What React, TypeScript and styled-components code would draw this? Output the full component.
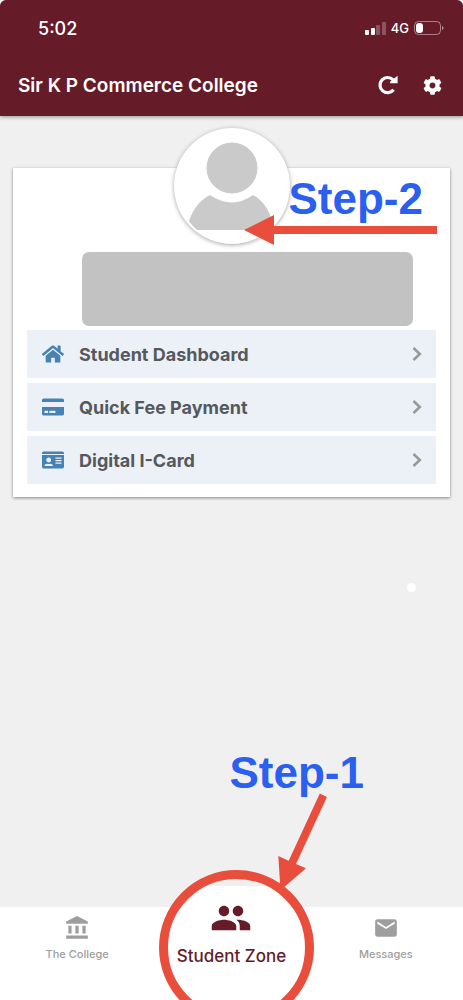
import React from "react";
import styled, { createGlobalStyle } from "styled-components";
import { FaCog, FaHome, FaCreditCard, FaIdCard } from "react-icons/fa";
import { MdAccountBalance, MdEmail, MdGroup } from "react-icons/md";

const colors = {
  maroon: "#661b29",
  page: "#f0f0f0",
  row: "#ebf1f7",
  blue: "#4682b4",
  ink: "#55595c",
  muted: "#9e9e9e",
  red: "#e94e3d",
  callout: "#2b5ff0",
};

const GlobalStyle = createGlobalStyle`
  *, *::before, *::after { box-sizing: border-box; }
  body { margin: 0; background: #fff; font-family: Inter, Roboto, sans-serif; }
`;

const Screen = styled.div`
  position: relative;
  display: flex;
  flex-direction: column;
  min-height: 100vh;
  overflow: hidden;
  border-radius: 6px 6px 0 0;
  background: ${colors.page};
`;

const Header = styled.header`
  background: ${colors.maroon};
  color: #fff;
  box-shadow: 0 1px 4px rgba(0, 0, 0, 0.4);
`;

const StatusBar = styled.div`
  display: flex;
  align-items: center;
  justify-content: space-between;
  height: 56px;
  padding: 0 19px 0 38px;
`;

const Clock = styled.time`
  font-size: 18px;
  font-weight: 500;
`;

const StatusIcons = styled.div`
  display: flex;
  align-items: center;
  gap: 5px;
  font-size: 13px;
  font-weight: 500;
`;

const TitleBar = styled.div`
  display: flex;
  align-items: center;
  justify-content: space-between;
  height: 60px;
  padding: 0 21px 2px 18px;
`;

const Title = styled.h1`
  margin: 0;
  font-size: 19px;
  font-weight: 600;
`;

const Actions = styled.div`
  display: flex;
  align-items: center;
  gap: 25px;
`;

const IconButton = styled.button`
  display: flex;
  padding: 0;
  border: 0;
  background: none;
  color: inherit;
  font-size: 19px;
  cursor: pointer;
`;

const Main = styled.main`
  position: relative;
  flex: 1;
  padding: 52px 13px 24px;
`;

const Card = styled.section`
  position: relative;
  padding: 84px 14px 13px;
  background: #fff;
  box-shadow: 0 1px 3px rgba(0, 0, 0, 0.45);
`;

const Avatar = styled.div`
  position: absolute;
  top: -40px;
  left: calc(50% - 58px);
  width: 116px;
  height: 116px;
  border-radius: 50%;
  background: #fff;
  box-shadow: 0 1px 4px rgba(0, 0, 0, 0.35);
`;

const NameBlock = styled.div`
  height: 74px;
  margin: 0 23px 4px 55px;
  border-radius: 7px;
  background: #c2c2c2;
`;

const Menu = styled.nav`
  display: flex;
  flex-direction: column;
  gap: 5px;
`;

const MenuLink = styled.a`
  display: flex;
  align-items: center;
  height: 48px;
  padding: 0 13px 0 15px;
  background: ${colors.row};
  color: ${colors.ink};
  font-size: 18px;
  font-weight: 700;
  text-decoration: none;
`;

const MenuIcon = styled.span`
  display: flex;
  width: 37px;
  color: ${colors.blue};
  font-size: 22px;
`;

const MenuText = styled.span`
  flex: 1;
`;

const CalloutText = styled.strong<{ $x: number; $y: number }>`
  position: absolute;
  top: ${(p) => p.$y}px;
  left: calc(50% + ${(p) => p.$x}px);
  color: ${colors.callout};
  font: 700 44px/44px "Liberation Sans", Arial, sans-serif;
  white-space: nowrap;
`;

const Arrow = styled.svg<{ $x: number; $y: number }>`
  position: absolute;
  top: ${(p) => p.$y}px;
  left: calc(50% + ${(p) => p.$x}px);
  fill: ${colors.red};
  pointer-events: none;
`;

const Dot = styled.span`
  position: absolute;
  top: 467px;
  right: 47px;
  width: 9px;
  height: 9px;
  border-radius: 50%;
  background: #fff;
`;

const TabBar = styled.nav`
  position: relative;
  display: grid;
  grid-template-columns: repeat(3, 1fr);
  height: 93px;
  background: #fff;
`;

const Tab = styled.a`
  position: relative;
  display: flex;
  flex-direction: column;
  align-items: center;
  gap: 5px;
  padding-top: 8px;
  color: ${colors.muted};
  font-size: 11px;
  line-height: 16px;
  font-weight: 500;
  text-decoration: none;

  svg { font-size: 26px; }
`;

const ActiveTab = styled(Tab)`
  padding-top: 0;
  margin-top: -10px;
  color: ${colors.maroon};
  font-size: 17px;
  line-height: 24px;
  white-space: nowrap;

  svg { font-size: 42px; }
`;

const Ring = styled.span`
  position: absolute;
  top: -37px;
  left: calc(50% - 73px);
  width: 155px;
  height: 155px;
  border: 9px solid ${colors.red};
  border-radius: 50%;
  background: linear-gradient(transparent 7px, #fff 7px) padding-box;
  pointer-events: none;
`;

const Chevron = () => (
  <svg width="12" height="16" viewBox="0 0 12 16" fill="none" stroke="#999" strokeWidth="2.6" aria-hidden="true">
    <path d="M2.5 2 8.8 8l-6.3 6" />
  </svg>
);

const RefreshIcon = () => (
  <svg width="20" height="20" viewBox="0 0 20 20" aria-hidden="true">
    <path d="M15.6 14.8A7.6 7.6 0 1 1 15 4.7" fill="none" stroke="#fff" strokeWidth="3.2" />
    <path d="M19.6.8v7.4h-7.4V6.4z" fill="#fff" />
  </svg>
);

const menu = [
  { label: "Student Dashboard", icon: <FaHome /> },
  { label: "Quick Fee Payment", icon: <FaCreditCard /> },
  { label: "Digital I-Card", icon: <FaIdCard /> },
];

export default function App() {
  return (
    <>
      <GlobalStyle />
      <Screen>
        <Header>
          <StatusBar>
            <Clock>5:02</Clock>
            <StatusIcons>
              <svg width="21" height="13" viewBox="0 0 21 13" fill="#fff" aria-hidden="true">
                <rect x="0" y="8" width="4" height="5" rx="1" />
                <rect x="6" y="6" width="4" height="7" rx="1" />
                <rect x="11" y="3" width="4" height="10" rx="1" opacity=".25" />
                <rect x="17" y="0" width="4" height="13" rx="1" opacity=".25" />
              </svg>
              <span>4G</span>
              <svg width="30" height="14" viewBox="0 0 30 14" aria-hidden="true">
                <rect x=".5" y=".5" width="26" height="13" rx="4" fill="none" stroke="#fff" opacity=".45" />
                <rect x="2" y="2" width="7" height="10" rx="3" fill="#fff" />
                <path d="M28 5v4c2-.6 2-3.4 0-4z" fill="#fff" opacity=".5" />
              </svg>
            </StatusIcons>
          </StatusBar>
          <TitleBar>
            <Title>Sir K P Commerce College</Title>
            <Actions>
              <IconButton aria-label="Refresh"><RefreshIcon /></IconButton>
              <IconButton aria-label="Settings"><FaCog /></IconButton>
            </Actions>
          </TitleBar>
        </Header>

        <Main>
          <Card>
            <NameBlock />
            <Menu>
              {menu.map((m) => (
                <MenuLink href="#" key={m.label}>
                  <MenuIcon>{m.icon}</MenuIcon>
                  <MenuText>{m.label}</MenuText>
                  <Chevron />
                </MenuLink>
              ))}
            </Menu>
            <Avatar>
              <svg width="116" height="116" viewBox="0 0 116 116" fill="#cacaca" aria-hidden="true">
                <circle cx="58" cy="40" r="25.5" />
                <path d="M36 67q22 15 43 0c9 5 16 14 19 26-2 5-4 7-7 9H23q-4-3-8-9c4-12 11-21 21-26z" />
              </svg>
            </Avatar>
            <CalloutText $x={57} $y={9}>Step-2</CalloutText>
            <Arrow $x={12} $y={47} width="193" height="30" viewBox="0 0 193 30">
              <path d="M0 15 30 0v11h163v8H30v11z" />
            </Arrow>
          </Card>
          <Dot />
        </Main>

        <TabBar>
          <Ring />
          <Tab href="#"><MdAccountBalance />The College</Tab>
          <ActiveTab href="#" aria-current="page"><MdGroup />Student Zone</ActiveTab>
          <Tab href="#"><MdEmail />Messages</Tab>
          <CalloutText $x={-2} $y={-156}>Step-1</CalloutText>
          <Arrow $x={44} $y={-117} width="56" height="102" viewBox="276 790 56 102">
            <path d="M319.8 793.5 327 797 296 864l10 4.3-25.5 22-2.2-34.3 10.4 4.7z" />
          </Arrow>
        </TabBar>
      </Screen>
    </>
  );
}
